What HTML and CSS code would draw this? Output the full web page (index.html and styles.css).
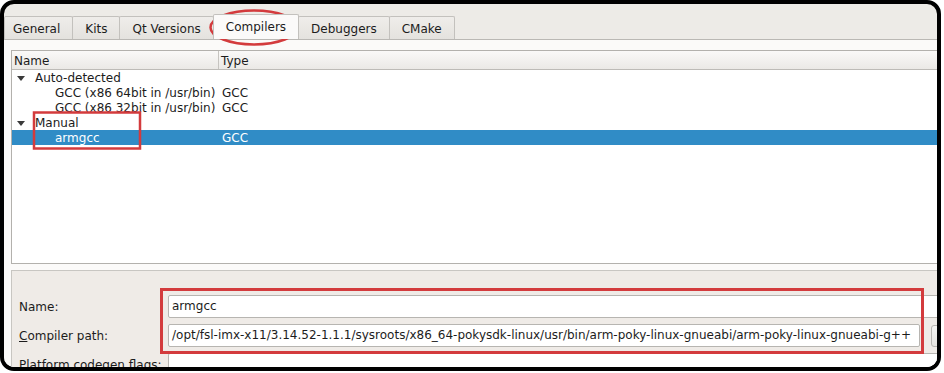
FILE: index.html
```html
<!DOCTYPE html>
<html lang="en">
  <head>
    <meta charset="utf-8" />
    <link rel="stylesheet" href="styles.css">
  </head>
  <body>
    <div class="shot">
      <div class="frame">
        <div class="tabbar">
          <div class="tab first">General</div>
          <div class="tab">Kits</div>
          <div class="tab">Qt Versions</div>
          <div class="tab active">Compilers</div>
          <div class="tab">Debuggers</div>
          <div class="tab">CMake</div>
        </div>

        <div class="page">
          <div class="tree">
            <div class="tree-head">
              <div class="col-name">Name</div>
              <div class="col-type">Type</div>
            </div>
            <div class="tree-row">
              <div class="col-name"><svg class="arrow" width="8" height="5" viewBox="0 0 8 5"><polygon points="0,0 8,0 4,5" /></svg>Auto-detected</div>
              <div class="col-type"></div>
            </div>
            <div class="tree-row child">
              <div class="col-name">GCC (x86 64bit in /usr/bin)</div>
              <div class="col-type">GCC</div>
            </div>
            <div class="tree-row child">
              <div class="col-name">GCC (x86 32bit in /usr/bin)</div>
              <div class="col-type">GCC</div>
            </div>
            <div class="tree-row">
              <div class="col-name"><svg class="arrow" width="8" height="5" viewBox="0 0 8 5"><polygon points="0,0 8,0 4,5" /></svg>Manual</div>
              <div class="col-type"></div>
            </div>
            <div class="tree-row child selected">
              <div class="col-name">armgcc</div>
              <div class="col-type">GCC</div>
            </div>
          </div>

          <div class="details">
            <div class="field">
              <label>Name:</label>
              <div class="input wide">armgcc</div>
            </div>
            <div class="field">
              <label><u>C</u>ompiler path:</label>
              <div class="input path">/opt/fsl-imx-x11/3.14.52-1.1.1/sysroots/x86_64-pokysdk-linux/usr/bin/arm-poky-linux-gnueabi/arm-poky-linux-gnueabi-g++</div>
              <div class="button"></div>
            </div>
            <div class="field">
              <label>Platform codegen flags:</label>
              <div class="input wide"></div>
            </div>
          </div>
        </div>
      </div>

      <!-- red annotation marks drawn over the screenshot -->
      <svg class="marks" width="944" height="373" viewBox="0 0 944 373">
        <ellipse cx="254" cy="27.5" rx="43.5" ry="17" />
        <rect x="34" y="112.5" width="106" height="36" />
        <rect x="161.5" y="289.5" width="761" height="63" class="thick" />
      </svg>
    </div>
  </body>
</html>
```

FILE: styles.css
```css
body {
  margin: 0;
  background: #fff;
  font-family: "DejaVu Sans", sans-serif;
  font-size: 12px;
  color: #1c1c1c;
}

.shot {
  position: relative;
  width: 944px;
  height: 373px;
  overflow: hidden;
}

.frame {
  box-sizing: border-box;
  width: 941px;
  height: 371px;
  border: 4px solid #000;
  border-radius: 14px;
  background: #edebe7;
  overflow: hidden;
  display: flex;
  flex-direction: column;
}

/* tabs */
.tabbar {
  flex: none;
  height: 35px;
  display: flex;
  align-items: flex-end;
}

.tab {
  box-sizing: border-box;
  height: 23px;
  line-height: 24px;
  padding: 0 12px;
  border: 1px solid #c3c1bd;
  border-bottom: none;
  border-radius: 2px 2px 0 0;
  margin-right: -1px;
  background: linear-gradient(#efedea, #e4e2de);
  white-space: nowrap;
}

.tab.first {
  padding-left: 8px;
}

.tab.active {
  position: relative;
  z-index: 1;
  height: 25px;
  line-height: 25px;
  background: #fbfaf9;
}

/* page under the tabs */
.page {
  flex: 1;
  min-height: 0;
  display: flex;
  flex-direction: column;
  padding: 10px 0 0 7px;
  border-top: 1px solid #bab8b4;
  background: #fbfaf9;
}

.tree {
  flex: none;
  box-sizing: border-box;
  width: 1000px;
  height: 214px;
  border: 1px solid #b3b1ad;
  background: #fff;
}

.tree-head {
  display: flex;
  height: 18px;
  line-height: 20px;
  border-bottom: 1px solid #bdbbb7;
  background: linear-gradient(#faf9f8, #ebe9e6);
}

.tree-head .col-name {
  width: 204px;
  padding-left: 2px;
  border-right: 1px solid #c6c4c0;
}

.tree-head .col-type {
  padding-left: 2px;
}

.tree-row {
  display: flex;
  height: 15px;
  line-height: 17px;
}

.tree-row .col-name {
  box-sizing: border-box;
  width: 207px;
  height: 15px;
  white-space: nowrap;
}

.tree-row .col-type {
  padding-left: 3px;
}

.tree-row.child .col-name {
  padding-left: 43px;
}

.arrow {
  margin: 0 10px 0 5px;
  vertical-align: 1px;
  fill: #3a3a3a;
}

.tree-row.selected {
  background: #308cc6;
  color: #fff;
}

/* form under the tree */
.details {
  flex: 1;
  width: 1000px;
  margin-top: 6px;
  padding: 24px 0 0 7px;
  border-top: 1px solid #c8c6c2;
  border-left: 1px solid #c8c6c2;
  background: #efebe7;
}

.field {
  display: flex;
  align-items: center;
  height: 23px;
  margin-bottom: 6px;
}

.field label {
  flex: none;
  width: 149px;
}

.input {
  box-sizing: border-box;
  height: 23px;
  line-height: 21px;
  padding: 0 3px;
  border: 1px solid #b7b5b1;
  border-radius: 2px;
  background: #fff;
  white-space: nowrap;
  overflow: hidden;
}

.input.wide {
  width: 800px;
}

.input.path {
  width: 752px;
}

.button {
  box-sizing: border-box;
  margin-left: 11px;
  width: 80px;
  height: 22px;
  border: 1px solid #b7b5b1;
  border-radius: 3px;
  background: linear-gradient(#f6f5f3, #e6e4e0);
}

.marks {
  position: absolute;
  top: 0;
  left: 0;
  fill: none;
  stroke: #d33b3d;
  stroke-width: 2.5;
}

.marks .thick {
  stroke-width: 3;
}
```
